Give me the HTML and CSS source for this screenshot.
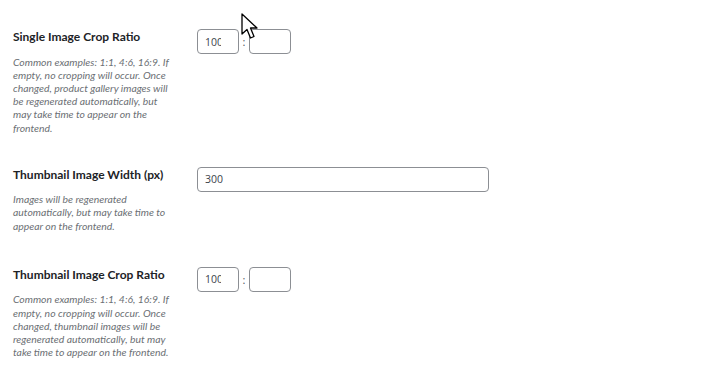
FILE: index.html
```html
<!DOCTYPE html>
<html>
<head>
<meta charset="utf-8">
<link rel="stylesheet" href="styles.css">
</head>
<body>
<div class="form">
  <div class="row row-first">
    <div class="label-col">
      <div class="label">Single Image Crop Ratio</div>
      <p class="desc">Common examples: 1:1, 4:6, 16:9. If empty, no cropping will occur. Once changed, product gallery images will be regenerated automatically, but may take time to appear on the frontend.</p>
    </div>
    <div class="field-col">
      <div class="ratio">
        <input class="input small" type="text" value="100">
        <span class="colon">:</span>
        <input class="input small" type="text" value="">
      </div>
    </div>
  </div>
  <div class="row row-second">
    <div class="label-col">
      <div class="label">Thumbnail Image Width (px)</div>
      <p class="desc">Images will be regenerated automatically, but may take time to appear on the frontend.</p>
    </div>
    <div class="field-col">
      <input class="input wide" type="text" value="300">
    </div>
  </div>
  <div class="row row-third">
    <div class="label-col">
      <div class="label">Thumbnail Image Crop Ratio</div>
      <p class="desc">Common examples: 1:1, 4:6, 16:9. If empty, no cropping will occur. Once changed, thumbnail images will be regenerated automatically, but may take time to appear on the frontend.</p>
    </div>
    <div class="field-col">
      <div class="ratio">
        <input class="input small" type="text" value="100">
        <span class="colon">:</span>
        <input class="input small" type="text" value="">
      </div>
    </div>
  </div>
</div>
<svg class="cursor" width="20" height="28" viewBox="0 0 20 28">
  <path d="M1 1 L1 21 L6 16.5 L9.5 25 L13 23.5 L9.5 15 L16 15 Z" fill="#fff" stroke="#000" stroke-width="1.3" stroke-linejoin="round"/>
</svg>
</body>
</html>
```
FILE: styles.css
```css
html, body {
  margin: 0;
  padding: 0;
  background: #fff;
}
body {
  width: 725px;
  height: 376px;
  overflow: hidden;
  position: relative;
  font-family: "Lato", "Open Sans", sans-serif;
  color: #1d2327;
}
.form {
  padding: 29px 0 0 13px;
}
.row {
  display: grid;
  grid-template-columns: 184px 1fr;
}
.row-second {
  margin-top: 32px;
}
.row-third {
  margin-top: 34px;
}
.label {
  font-family: "Lato", sans-serif;
  font-weight: 700;
  font-size: 12px;
  line-height: 16px;
  color: #1d2327;
}
.desc {
  margin: 10.5px 0 0;
  font-family: "Lato", sans-serif;
  font-style: italic;
  font-size: 10.4px;
  line-height: 13.2px;
  color: #6b6f74;
  width: 164px;
}
.ratio {
  display: flex;
  align-items: center;
  gap: 3px;
}
.input {
  box-sizing: border-box;
  height: 25px;
  border: 1px solid #8c8f94;
  border-radius: 4px;
  background: #fff;
  font-family: "Open Sans", sans-serif;
  font-size: 10.5px;
  color: #3c434a;
  padding: 0 6px 0 7px;
  margin: 0;
  outline: none;
}
.small {
  width: 42px;
  padding-right: 17px;
}
.wide {
  width: 292px;
}
.colon {
  font-family: "Open Sans", sans-serif;
  font-size: 11px;
  color: #50575e;
  width: 4px;
  text-align: center;
}
.cursor {
  position: absolute;
  left: 241px;
  top: 13px;
}
```
